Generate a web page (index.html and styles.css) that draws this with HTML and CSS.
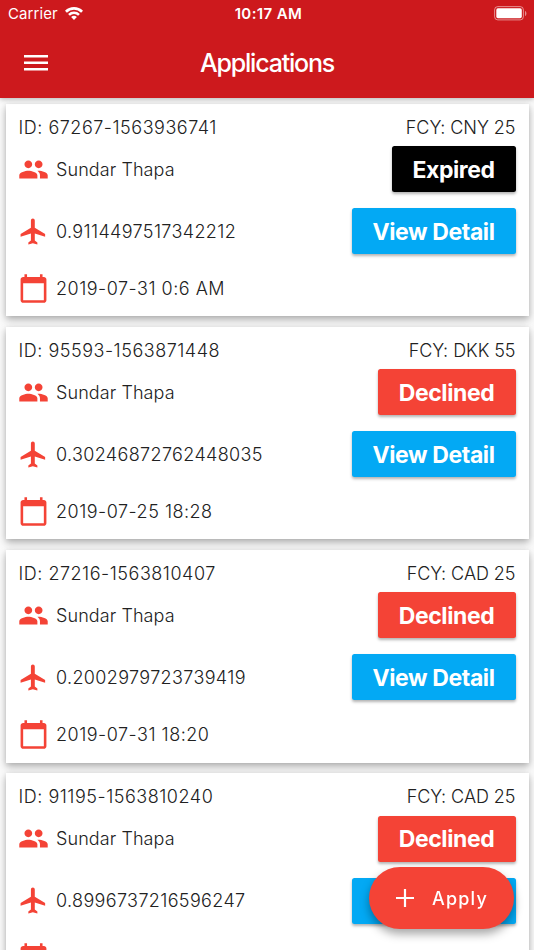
FILE: index.html
```html
<!DOCTYPE html>
<html lang="en">
<head>
<meta charset="utf-8">
<title>Applications</title>
<link rel="stylesheet" href="styles.css">
</head>
<body>
<svg class="sprite" aria-hidden="true">
  <symbol id="people" viewBox="0 0 24 24"><path d="M16 11c1.66 0 2.99-1.34 2.99-3S17.66 5 16 5c-1.66 0-3 1.34-3 3s1.34 3 3 3zm-8 0c1.66 0 2.99-1.34 2.99-3S9.66 5 8 5C6.34 5 5 6.34 5 8s1.34 3 3 3zm0 2c-2.33 0-7 1.17-7 3.5V19h14v-2.5c0-2.33-4.67-3.5-7-3.5zm8 0c-.29 0-.62.02-.97.05 1.16.84 1.97 1.97 1.97 3.45V19h6v-2.5c0-2.33-4.67-3.5-7-3.5z"/></symbol>
  <symbol id="plane" viewBox="0 0 24 24"><path d="M21 16v-2l-8-5V3.5c0-.83-.67-1.5-1.5-1.5S10 2.67 10 3.5V9l-8 5v2l8-2.5V19l-2 1.5V22l3.5-1 3.5 1v-1.5L13 19v-5.5l8 2.5z"/></symbol>
  <symbol id="calendar" viewBox="0 0 24 24"><path d="M20 3h-1V1h-2v2H7V1H5v2H4c-1.1 0-2 .9-2 2v16c0 1.1.9 2 2 2h16c1.1 0 2-.9 2-2V5c0-1.1-.9-2-2-2zm0 18H4V8h16v13z"/></symbol>
</svg>
<header class="app-bar">
  <div class="status-bar">
    <div class="carrier"><span>Carrier</span>
      <svg class="wifi" viewBox="0 0 18 13"><path d="M9 13L6.1 10.1a4.1 4.1 0 0 1 5.8 0zM4.9 8.8L3.1 7a8.4 8.4 0 0 1 11.8 0l-1.8 1.8a5.8 5.8 0 0 0-8.2 0zM1.9 5.7L0 3.8a12.7 12.7 0 0 1 18 0l-1.9 1.9a10 10 0 0 0-14.2 0z"/></svg>
    </div>
    <div class="clock">10:17 AM</div>
    <svg class="battery" viewBox="0 0 33 15"><rect class="shell" x=".6" y=".6" width="28.8" height="13.3" rx="3.2"/><rect x="2.3" y="2.3" width="25.5" height="9.9" rx="1.6"/><path class="tip" d="M31 5c1.9.5 1.9 4.5 0 5z"/></svg>
  </div>
  <div class="toolbar">
    <svg class="menu" viewBox="0 0 24 16"><path d="M0 0h24v2.6H0zM0 6.5h24v2.6H0zM0 13h24v2.6H0z"/></svg>
    <h1>Applications</h1>
  </div>
</header>
<main class="list">
  <article class="card">
    <div class="head"><span class="ref">ID: 67267-1563936741</span><span class="fcy">FCY: CNY 25</span></div>
    <div class="row"><svg class="icon"><use href="#people"/></svg><span class="name">Sundar Thapa</span><button class="btn expired">Expired</button></div>
    <div class="row"><svg class="icon"><use href="#plane"/></svg><span class="rate">0.9114497517342212</span><button class="btn detail">View Detail</button></div>
    <div class="row date"><svg class="icon"><use href="#calendar"/></svg><span>2019-07-31 0:6 AM</span></div>
  </article>
  <article class="card">
    <div class="head"><span class="ref">ID: 95593-1563871448</span><span class="fcy">FCY: DKK 55</span></div>
    <div class="row"><svg class="icon"><use href="#people"/></svg><span class="name">Sundar Thapa</span><button class="btn declined">Declined</button></div>
    <div class="row"><svg class="icon"><use href="#plane"/></svg><span class="rate">0.30246872762448035</span><button class="btn detail">View Detail</button></div>
    <div class="row date"><svg class="icon"><use href="#calendar"/></svg><span>2019-07-25 18:28</span></div>
  </article>
  <article class="card">
    <div class="head"><span class="ref">ID: 27216-1563810407</span><span class="fcy">FCY: CAD 25</span></div>
    <div class="row"><svg class="icon"><use href="#people"/></svg><span class="name">Sundar Thapa</span><button class="btn declined">Declined</button></div>
    <div class="row"><svg class="icon"><use href="#plane"/></svg><span class="rate">0.2002979723739419</span><button class="btn detail">View Detail</button></div>
    <div class="row date"><svg class="icon"><use href="#calendar"/></svg><span>2019-07-31 18:20</span></div>
  </article>
  <article class="card">
    <div class="head"><span class="ref">ID: 91195-1563810240</span><span class="fcy">FCY: CAD 25</span></div>
    <div class="row"><svg class="icon"><use href="#people"/></svg><span class="name">Sundar Thapa</span><button class="btn declined">Declined</button></div>
    <div class="row"><svg class="icon"><use href="#plane"/></svg><span class="rate">0.8996737216596247</span><button class="btn detail" aria-label="View Detail"></button></div>
    <div class="row date"><svg class="icon"><use href="#calendar"/></svg></div>
  </article>
</main>
<button class="fab"><svg viewBox="0 0 18 18"><path d="M7.9 0h2.2v7.9H18v2.2h-7.9V18H7.9v-7.9H0V7.9h7.9z"/></svg><span>Apply</span></button>
</body>
</html>
```

FILE: styles.css
```css
* { box-sizing: border-box; }
body {
  margin: 0;
  height: 950px;
  overflow: hidden;
  display: flex;
  flex-direction: column;
  background: #fafafa;
  color: #212121;
  font-family: Inter, "Liberation Sans", sans-serif;
  font-size: 18px;
}
.sprite { position: absolute; width: 0; height: 0; }
svg { display: block; fill: currentColor; flex: none; }
button { border: 0; font-family: inherit; color: #fff; }

.app-bar {
  position: relative;
  z-index: 1;
  flex: none;
  height: 98px;
  background: #cd191d;
  color: #fff;
  box-shadow: 0 1px 5px rgba(0, 0, 0, .3);
}
.status-bar {
  display: grid;
  grid-template-columns: 1fr auto 1fr;
  align-items: center;
  height: 27px;
  padding: 0 7px 0 8px;
}
.carrier { display: flex; align-items: center; gap: 7px; font-size: 15px; letter-spacing: .1px; }
.wifi { width: 18px; height: 13px; }
.clock { padding-left: 2px; font-size: 15px; font-weight: 600; letter-spacing: .4px; }
.battery { width: 33px; height: 15px; justify-self: end; }
.shell { fill: none; stroke: #fff; stroke-opacity: .5; stroke-width: 1; }
.tip { fill-opacity: .5; }
.toolbar {
  display: grid;
  grid-template-columns: 24px 1fr 24px;
  align-items: center;
  height: 71px;
  padding: 0 24px;
}
.menu { width: 24px; height: 16px; }
h1 { margin: 0; text-align: center; font-size: 25px; line-height: 32px; font-weight: 500; letter-spacing: -1.2px; }

.list { display: flex; flex-direction: column; gap: 10.4px; padding: 5.5px 5.5px 0; font-weight: 350; }
.card {
  flex: none;
  height: 212.8px;
  padding: 4.5px 13px 0 12.5px;
  background: #fff;
  box-shadow: 0 4px 8px rgba(0, 0, 0, .26), 0 1px 5px rgba(0, 0, 0, .1);
}
.head { display: flex; justify-content: space-between; align-items: center; height: 38px; }
.row { display: flex; align-items: center; height: 46px; margin-bottom: 16px; }
.row.date { height: 57px; margin: -10.5px 0 0; letter-spacing: .5px; }
.ref { padding-left: .5px; letter-spacing: .52px; }
.fcy { letter-spacing: -.05px; }
.name { letter-spacing: .08px; }
.rate { letter-spacing: .36px; }
.icon { width: 31px; height: 31px; margin-right: 7px; color: #f44336; }
.btn {
  height: 46px;
  margin-left: auto;
  padding: 1px 0 0;
  border-radius: 2.5px;
  font-size: 23px;
  font-weight: 700;
  letter-spacing: -.4px;
  box-shadow: 0 2px 3px rgba(0, 0, 0, .3);
}
.expired { width: 124px; background: #000; }
.declined { width: 138px; background: #f44336; }
.detail { width: 164px; background: #03a9f4; }

.fab {
  position: fixed;
  z-index: 2;
  right: 20px;
  bottom: 21px;
  display: flex;
  align-items: center;
  width: 145px;
  height: 62px;
  padding: 0 0 0 27px;
  border-radius: 31px;
  background: #f44336;
  font-size: 18px;
  font-weight: 500;
  letter-spacing: 1.2px;
  box-shadow: 0 5px 10px rgba(0, 0, 0, .35);
}
.fab svg { width: 18px; height: 18px; margin-right: 18px; }
```
